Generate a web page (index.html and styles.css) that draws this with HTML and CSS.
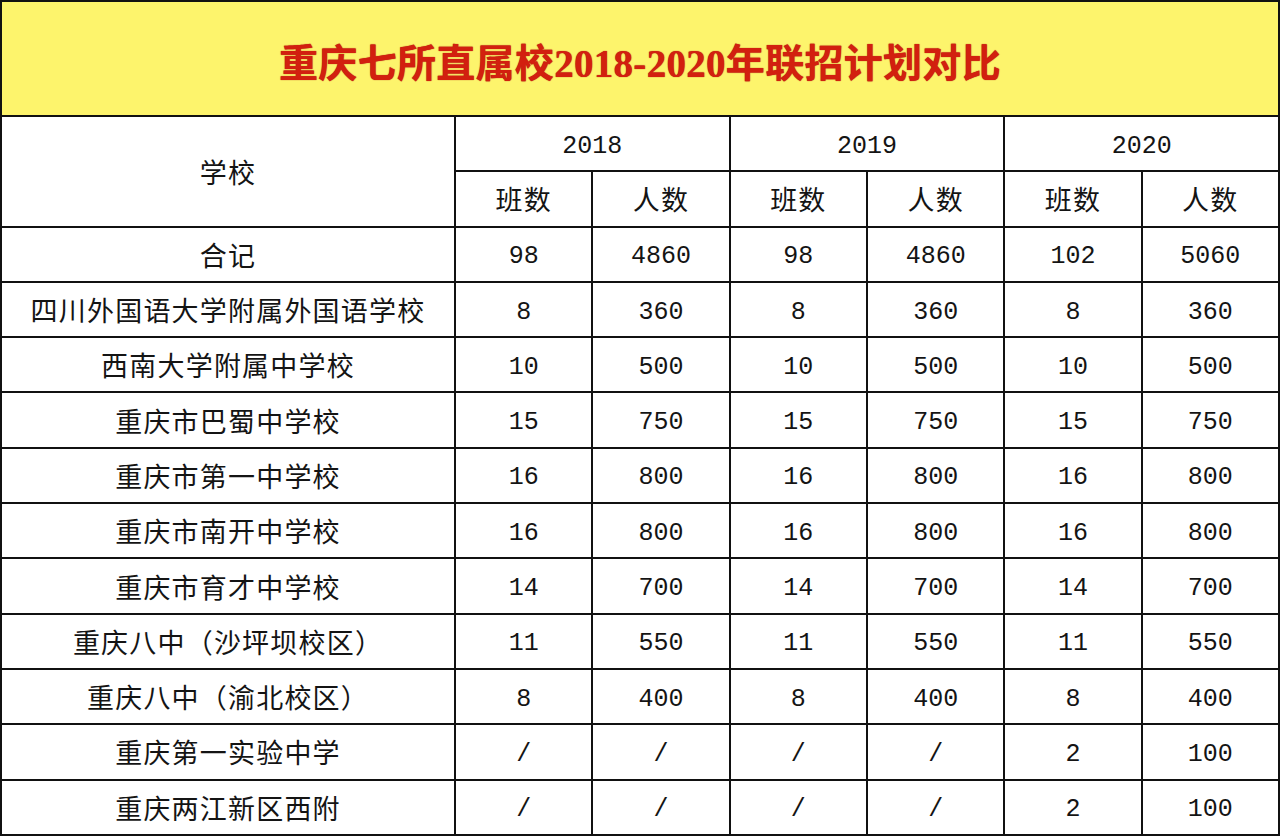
FILE: index.html
```html
<!DOCTYPE html>
<html lang="zh-CN">
<head>
<meta charset="utf-8">
<title>重庆七所直属校2018-2020年联招计划对比</title>
<link rel="stylesheet" href="styles.css">
</head>
<body>
<table class="plan">
  <colgroup>
    <col class="c-school">
    <col class="c-num"><col class="c-num"><col class="c-num">
    <col class="c-num"><col class="c-num"><col class="c-num">
  </colgroup>
  <thead>
    <tr class="title-row"><th colspan="7" class="title">重庆七所直属校2018-2020年联招计划对比</th></tr>
    <tr class="row"><th rowspan="2" class="cjk">学校</th><th colspan="2" class="num">2018</th><th colspan="2" class="num">2019</th><th colspan="2" class="num">2020</th></tr>
    <tr class="row"><th class="cjk">班数</th><th class="cjk">人数</th><th class="cjk">班数</th><th class="cjk">人数</th><th class="cjk">班数</th><th class="cjk">人数</th></tr>
  </thead>
  <tbody>
    <tr class="row"><td class="cjk">合记</td><td class="num">98</td><td class="num">4860</td><td class="num">98</td><td class="num">4860</td><td class="num">102</td><td class="num">5060</td></tr>
    <tr class="row"><td class="cjk">四川外国语大学附属外国语学校</td><td class="num">8</td><td class="num">360</td><td class="num">8</td><td class="num">360</td><td class="num">8</td><td class="num">360</td></tr>
    <tr class="row"><td class="cjk">西南大学附属中学校</td><td class="num">10</td><td class="num">500</td><td class="num">10</td><td class="num">500</td><td class="num">10</td><td class="num">500</td></tr>
    <tr class="row"><td class="cjk">重庆市巴蜀中学校</td><td class="num">15</td><td class="num">750</td><td class="num">15</td><td class="num">750</td><td class="num">15</td><td class="num">750</td></tr>
    <tr class="row"><td class="cjk">重庆市第一中学校</td><td class="num">16</td><td class="num">800</td><td class="num">16</td><td class="num">800</td><td class="num">16</td><td class="num">800</td></tr>
    <tr class="row"><td class="cjk">重庆市南开中学校</td><td class="num">16</td><td class="num">800</td><td class="num">16</td><td class="num">800</td><td class="num">16</td><td class="num">800</td></tr>
    <tr class="row"><td class="cjk">重庆市育才中学校</td><td class="num">14</td><td class="num">700</td><td class="num">14</td><td class="num">700</td><td class="num">14</td><td class="num">700</td></tr>
    <tr class="row"><td class="cjk">重庆八中（沙坪坝校区）</td><td class="num">11</td><td class="num">550</td><td class="num">11</td><td class="num">550</td><td class="num">11</td><td class="num">550</td></tr>
    <tr class="row"><td class="cjk">重庆八中（渝北校区）</td><td class="num">8</td><td class="num">400</td><td class="num">8</td><td class="num">400</td><td class="num">8</td><td class="num">400</td></tr>
    <tr class="row"><td class="cjk">重庆第一实验中学</td><td class="num">/</td><td class="num">/</td><td class="num">/</td><td class="num">/</td><td class="num">2</td><td class="num">100</td></tr>
    <tr class="row"><td class="cjk">重庆两江新区西附</td><td class="num">/</td><td class="num">/</td><td class="num">/</td><td class="num">/</td><td class="num">2</td><td class="num">100</td></tr>
  </tbody>
</table>
</body>
</html>
```
FILE: styles.css
```css
html, body {
  margin: 0;
  padding: 0;
  background: #ffffff;
}

.plan {
  width: 1280px;
  border-collapse: collapse;
  table-layout: fixed;
  color: #141414;
}

.c-school { width: 453px; }
.c-num { width: 137px; }

.plan th,
.plan td {
  border: 2px solid #111111;
  padding: 0;
  text-align: center;
  vertical-align: middle;
  font-weight: normal;
  overflow: hidden;
  white-space: nowrap;
}

.title-row { height: 115px; }

.plan .title {
  background: #fdf46c;
  color: #d2200f;
  font-family: "Liberation Serif", "Noto Sans CJK SC", serif;
  font-weight: bold;
  font-size: 39px;
  letter-spacing: 0.3px;
  text-shadow: 0 0 1px #a0100a;
  padding-top: 2px;
}

.row { height: 55.3px; }

.plan .cjk {
  font-family: "Noto Sans CJK SC", sans-serif;
  font-size: 27px;
  letter-spacing: 1.2px;
}

.plan .num {
  font-family: "Liberation Mono", "Noto Sans CJK SC", monospace;
  font-size: 25px;
  line-height: 30px;
  padding-top: 6px;
}
```
